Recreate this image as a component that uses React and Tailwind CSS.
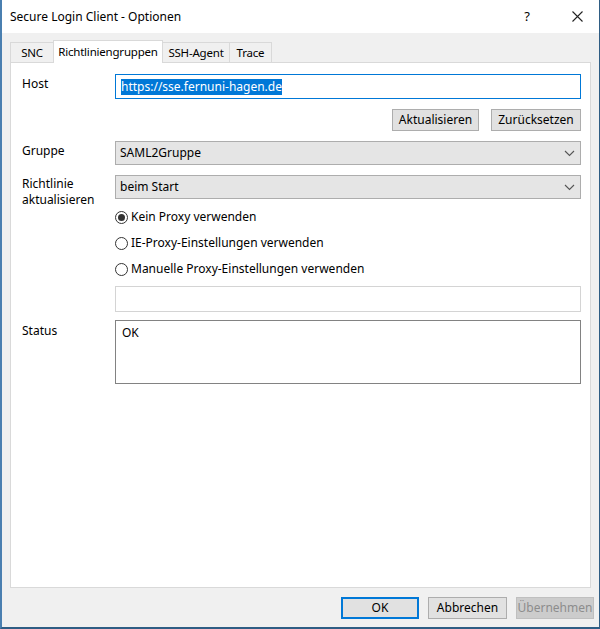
import React from "react";

const font = { fontFamily: '"Noto Sans", "Open Sans", sans-serif' };

function Chevron() {
  return (
    <svg width="11" height="7" viewBox="0 0 11 7" className="shrink-0">
      <path d="M1 1 L5.5 5.5 L10 1" fill="none" stroke="#555" strokeWidth="1.1" />
    </svg>
  );
}

function Combo({ value }) {
  return (
    <div className="h-[24px] flex items-center justify-between border border-[#adadad] bg-[#e5e5e5] pl-[4px] pr-[5px]">
      <span>{value}</span>
      <Chevron />
    </div>
  );
}

function Radio({ checked, label }) {
  return (
    <div className="h-[26px] flex items-center gap-[3px]">
      <span className="w-[13px] h-[13px] rounded-full border border-[#333] bg-white flex items-center justify-center">
        {checked && <span className="w-[7px] h-[7px] rounded-full bg-[#333]" />}
      </span>
      <span>{label}</span>
    </div>
  );
}

function Btn({ children, primary, disabled, w }) {
  let cls = "h-[22px] flex items-center justify-center border whitespace-nowrap ";
  if (primary) cls += "border-[#0078d7] bg-[#e1e1e1] shadow-[inset_0_0_0_1px_#0078d7] text-black";
  else if (disabled) cls += "border-[#bfbfbf] bg-[#cccccc] text-[#8c8c8c]";
  else cls += "border-[#adadad] bg-[#e1e1e1] text-black";
  return (
    <div className={cls} style={{ width: w }}>
      {children}
    </div>
  );
}

export default function App() {
  return (
    <div
      className="w-[600px] h-[629px] flex flex-col bg-[#f0f0f0] border-l-[2px] border-l-[#4a7fb0] border-r border-r-[#2f5d84] border-b-[2px] border-b-[#2f5d84] text-[12px] text-black overflow-hidden"
      style={font}
    >
      {/* title bar */}
      <div className="h-[33px] bg-white flex items-center pl-[8px] pr-[16px] shrink-0">
        <span className="flex-1 text-[12px]">Secure Login Client - Optionen</span>
        <span className="text-[13px] mr-[42px]">?</span>
        <svg width="11" height="11" viewBox="0 0 11 11">
          <path d="M0.5 0.5 L10.5 10.5 M10.5 0.5 L0.5 10.5" stroke="#222" strokeWidth="1.1" />
        </svg>
      </div>

      {/* tabs */}
      <div className="flex items-end pl-[8px] mt-[6px] h-[23px] shrink-0 text-[11.5px] tracking-[-0.2px]">
        <div className="w-[43px] h-[20px] flex items-center justify-center border border-[#d9d9d9] border-r-0 border-b-0 bg-[#f0f0f0]">SNC</div>
        <div className="w-[110px] h-[23px] flex items-center justify-center border border-[#d9d9d9] border-b-0 bg-white relative top-[1px] z-10">Richtliniengruppen</div>
        <div className="w-[66px] h-[20px] flex items-center justify-center border-t border-[#d9d9d9] bg-[#f0f0f0]">SSH-Agent</div>
        <div className="w-[43px] h-[20px] flex items-center justify-center border border-[#d9d9d9] border-b-0 bg-[#f0f0f0]">Trace</div>
      </div>

      {/* panel */}
      <div className="mx-[8px] flex-1 bg-white border border-[#d9d9d9] pt-[11px] pl-[11px] pr-[9px]">
        <div className="grid grid-cols-[93px_1fr]">
          <div className="pt-[1px]">Host</div>
          <div className="h-[25px] border border-[#0078d7] flex items-center pl-[5px]">
            <span className="bg-[#0078d7] text-white leading-[16px]">https://sse.fernuni-hagen.de</span>
          </div>

          <div />
          <div className="flex justify-end gap-[12px] mt-[10px]">
            <Btn w="87px">Aktualisieren</Btn>
            <Btn w="90px">Zurücksetzen</Btn>
          </div>

          <div className="mt-[10px] pt-[1px]">Gruppe</div>
          <div className="mt-[10px]">
            <Combo value="SAML2Gruppe" />
          </div>

          <div className="mt-[10px] leading-[16px] pt-[1px]">
            Richtlinie
            <br />
            aktualisieren
          </div>
          <div className="mt-[10px]">
            <Combo value="beim Start" />
            <div className="mt-[5px]">
              <Radio checked label="Kein Proxy verwenden" />
              <Radio label="IE-Proxy-Einstellungen verwenden" />
              <Radio label="Manuelle Proxy-Einstellungen verwenden" />
            </div>
            <div className="mt-[4px] h-[26px] border border-[#d4d4d4]" />
          </div>

          <div className="mt-[8px] pt-[2px]">Status</div>
          <div className="mt-[8px] h-[64px] border border-[#828282] pl-[6px] pt-[3px]">OK</div>
        </div>
      </div>

      {/* bottom buttons */}
      <div className="h-[39px] shrink-0 flex items-center justify-end gap-[9px] pr-[5px]">
        <Btn primary w="78px">OK</Btn>
        <Btn w="79px">Abbrechen</Btn>
        <Btn disabled w="78px">Übernehmen</Btn>
      </div>
    </div>
  );
}
